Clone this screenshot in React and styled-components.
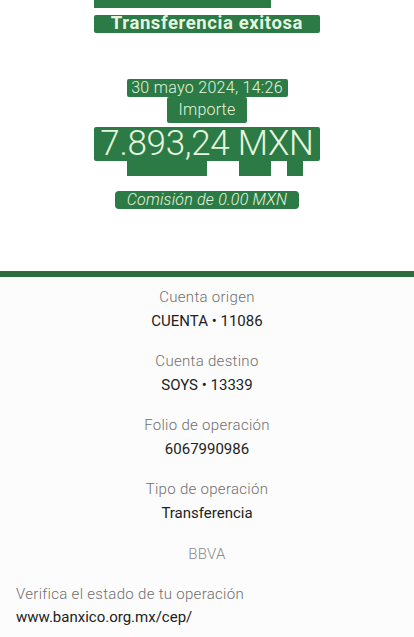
import React from "react";
import styled, { createGlobalStyle } from "styled-components";

const GREEN = "#2c7a45";
const MINT = "#e4f6df";

const Global = createGlobalStyle`
  html, body {
    margin: 0;
    padding: 0;
    background: #ffffff;
  }
  body {
    font-family: Roboto, "Liberation Sans", sans-serif;
  }
`;

const Page = styled.div`
  width: 414px;
  min-height: 637px;
  display: flex;
  flex-direction: column;
`;

const Header = styled.header`
  height: 271px;
  display: flex;
  flex-direction: column;
  align-items: center;
`;

const TitleBlock = styled.div`
  display: flex;
  flex-direction: column;
  align-items: flex-start;
  gap: 7px;
`;

const Stub = styled.div`
  width: ${(p) => p.w}px;
  height: ${(p) => p.h}px;
  background: ${GREEN};
`;

const Title = styled.h1`
  margin: 0;
  width: 226px;
  height: 18px;
  background: ${GREEN};
  color: ${MINT};
  font-size: 18.5px;
  font-weight: 700;
  letter-spacing: 0.6px;
  line-height: 16px;
  text-align: center;
  border-radius: 2px;
`;

const Pill = styled.div`
  margin-top: ${(p) => p.mt || 0}px;
  background: ${GREEN};
  color: ${MINT};
  width: ${(p) => p.w}px;
  height: ${(p) => p.h}px;
  line-height: ${(p) => p.h}px;
  font-size: ${(p) => p.size}px;
  font-weight: 300;
  font-style: ${(p) => (p.italic ? "italic" : "normal")};
  text-align: center;
  border-radius: ${(p) => p.r || 2}px;
  letter-spacing: ${(p) => p.ls || 0}px;
  white-space: nowrap;
`;

const AmountBlock = styled.div`
  margin-top: 4px;
  display: flex;
  flex-direction: column;
  align-items: flex-start;
`;

const Tabs = styled.div`
  display: flex;
  width: 226px;
`;

const Tab = styled.div`
  margin-left: ${(p) => p.ml}px;
  width: ${(p) => p.w}px;
  height: 15px;
  background: ${GREEN};
`;

const Rule = styled.div`
  height: 6px;
  background: #2e6b3d;
`;

const Details = styled.section`
  flex: 1;
  background: #fcfcfc;
  padding: 10px 16px 0;
  display: flex;
  flex-direction: column;
`;

const Field = styled.div`
  display: flex;
  flex-direction: column;
  align-items: center;
  gap: 4px;
  margin-bottom: 20px;
`;

const Label = styled.div`
  font-size: 15px;
  line-height: 20px;
  font-weight: 300;
  letter-spacing: 0.3px;
  color: #6f6f6f;
`;

const Value = styled.div`
  font-size: 15px;
  line-height: 20px;
  font-weight: 400;
  color: #222222;
`;

const Bank = styled(Label)`
  text-align: center;
  margin-top: 1px;
  margin-bottom: 20px;
  color: #8a8a8a;
`;

const Verify = styled.div`
  display: flex;
  flex-direction: column;
  gap: 3px;
`;

const fields = [
  ["Cuenta origen", "CUENTA • 11086"],
  ["Cuenta destino", "SOYS • 13339"],
  ["Folio de operación", "6067990986"],
  ["Tipo de operación", "Transferencia"],
];

export default function App() {
  return (
    <Page>
      <Global />
      <Header>
        <TitleBlock>
          <Stub w={177} h={8} />
          <Title>Transferencia exitosa</Title>
        </TitleBlock>
        <Pill mt={46} w={161} h={18} size={16} ls={0.3}>
          30 mayo 2024, 14:26
        </Pill>
        <Pill w={80} h={26} size={16} ls={0.2}>
          Importe
        </Pill>
        <AmountBlock>
          <Pill w={226} h={34} size={35} ls={-0.3}>
            7.893,24 MXN
          </Pill>
          <Tabs>
            <Tab ml={33} w={80} />
            <Tab ml={32} w={32} />
            <Tab ml={16} w={16} />
          </Tabs>
        </AmountBlock>
        <Pill mt={15} w={184} h={18} size={16} italic r={4} ls={0.2}>
          Comisión de 0.00 MXN
        </Pill>
      </Header>
      <Rule />
      <Details>
        {fields.map(([label, value]) => (
          <Field key={label}>
            <Label>{label}</Label>
            <Value>{value}</Value>
          </Field>
        ))}
        <Bank>BBVA</Bank>
        <Verify>
          <Label>Verifica el estado de tu operación</Label>
          <Value>www.banxico.org.mx/cep/</Value>
        </Verify>
      </Details>
    </Page>
  );
}
